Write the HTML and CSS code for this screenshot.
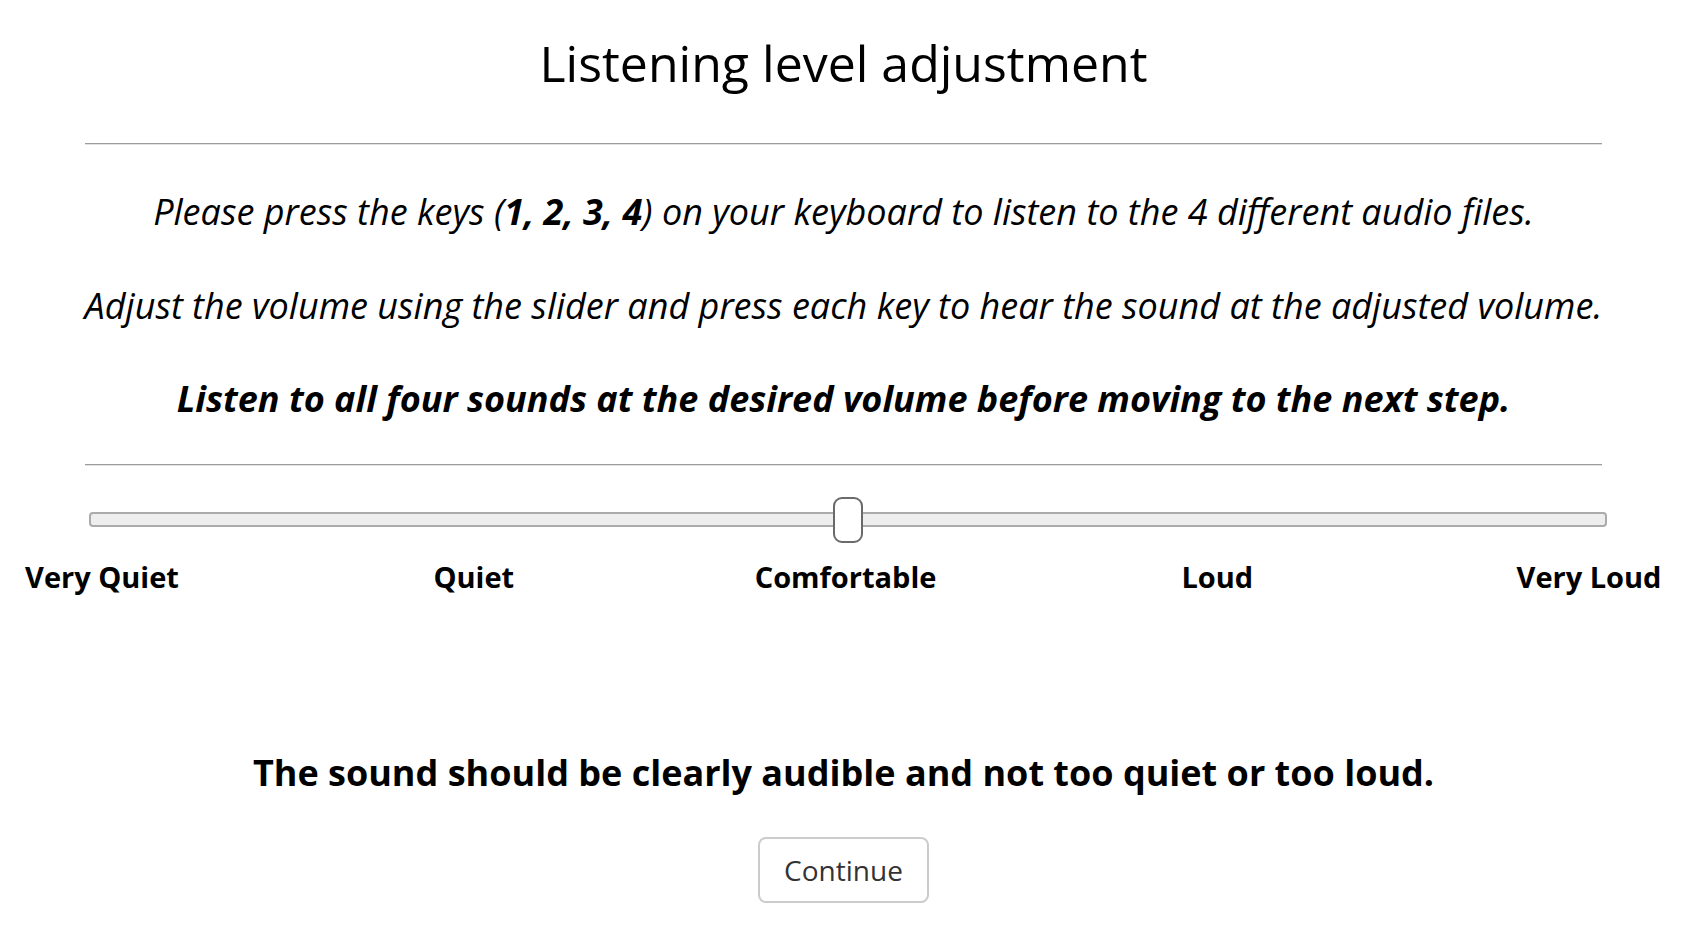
FILE: index.html
```html
<!DOCTYPE html>
<html lang="en">
<head>
<meta charset="utf-8">
<title>Listening level adjustment</title>
<link rel="stylesheet" href="styles.css">
</head>
<body>
<main class="page">
  <h1 class="title">Listening level adjustment</h1>
  <hr class="rule rule-top">
  <p class="para para-first">Please press the keys (<b>1, 2, 3, 4</b>) on your keyboard to listen to the 4 different audio files.</p>
  <p class="para">Adjust the volume using the slider and press each key to hear the sound at the adjusted volume.</p>
  <p class="para para-strong">Listen to all four sounds at the desired volume before moving to the next step.</p>
  <hr class="rule rule-bottom">
  <div class="slider">
    <div class="track"></div>
    <div class="thumb"></div>
  </div>
  <div class="labels">
    <span class="label"><span>Very Quiet</span></span>
    <span class="label"><span>Quiet</span></span>
    <span class="label"><span>Comfortable</span></span>
    <span class="label"><span>Loud</span></span>
    <span class="label"><span>Very Loud</span></span>
  </div>
  <p class="note">The sound should be clearly audible and not too quiet or too loud.</p>
  <div class="actions">
    <button class="btn" type="button">Continue</button>
  </div>
</main>
</body>
</html>
```

FILE: styles.css
```css
html, body {
  margin: 0;
  padding: 0;
  background: #fff;
}

.page {
  width: 1687px;
  font-family: "Open Sans", "Noto Sans", sans-serif;
  color: #000;
  text-align: center;
}

.title {
  margin: 25px 0 0;
  font-size: 50px;
  font-weight: 400;
  line-height: 77px;
}

.rule {
  width: 1517px;
  height: 0;
  margin: 0 auto;
  border: 0;
  border-top: 1px solid #9c9c9c;
  border-bottom: 1px solid #e2e2e2;
}

.rule-top {
  margin-top: 41px;
}

.para {
  margin: 36px 0 0;
  font-size: 36px;
  font-style: italic;
  line-height: 57.6px;
}

.para-first {
  margin-top: 38px;
}

.para b,
.para-strong {
  font-weight: 700;
}

.rule-bottom {
  margin-top: 36px;
}

.slider {
  position: relative;
  display: flex;
  align-items: center;
  width: 1518px;
  height: 46px;
  margin: 31px 0 0 89px;
}

.track {
  flex: 1;
  height: 15px;
  box-sizing: border-box;
  border: 2px solid #ababab;
  border-radius: 4px;
  background: #eeeeee;
}

.thumb {
  position: absolute;
  top: 0;
  left: 50%;
  width: 30px;
  height: 46px;
  box-sizing: border-box;
  transform: translateX(-50%);
  border: 2px solid #6a6a6a;
  border-radius: 9px;
  background: #fff;
}

.labels {
  display: flex;
  justify-content: space-between;
  width: 1487px;
  margin: 14px 0 0 102px;
  font-size: 29px;
  font-weight: 700;
  line-height: 40px;
}

.label {
  display: flex;
  justify-content: center;
  width: 0;
  white-space: nowrap;
}

.note {
  margin: 147px 0 0;
  font-size: 36px;
  font-weight: 700;
  line-height: 57.6px;
}

.actions {
  display: flex;
  justify-content: center;
  margin-top: 36px;
}

.btn {
  box-sizing: border-box;
  height: 66px;
  padding: 0 24px;
  border: 2px solid #cccccc;
  border-radius: 8px;
  background: #fff;
  color: #333;
  font-family: "Open Sans", "Noto Sans", sans-serif;
  font-size: 28px;
  line-height: 1.4;
}
```
